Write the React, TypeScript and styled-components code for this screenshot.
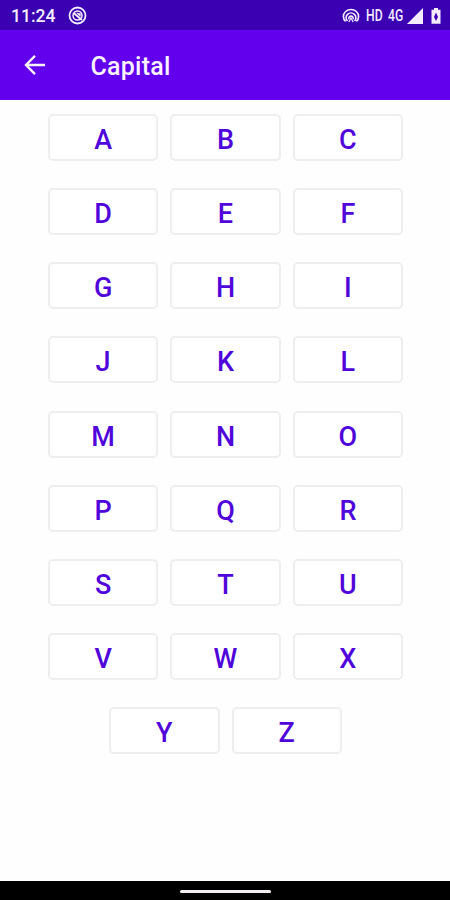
import React from "react";
import styled, { createGlobalStyle } from "styled-components";

const GlobalStyle = createGlobalStyle`
  * { box-sizing: border-box; }
  html, body { margin: 0; padding: 0; background: #fff; }
  body { font-family: Roboto, "Liberation Sans", sans-serif; overflow: hidden; }
`;

const Screen = styled.div`
  width: 450px;
  height: 900px;
  display: flex;
  flex-direction: column;
  background: #fefefe;
`;

const StatusBar = styled.header`
  height: 30px;
  flex: none;
  display: flex;
  align-items: center;
  padding: 2px 8px 0 11px;
  background: #3a00b2;
  color: #f3edff;
`;

const Clock = styled.span`
  width: 57px;
  font-size: 17.5px;
  font-weight: 500;
  line-height: 28px;
`;

const StatusIcons = styled.div`
  margin-left: auto;
  display: flex;
  align-items: center;
`;

const NetworkLabel = styled.span<{ $width: number; $inset?: number }>`
  display: block;
  width: ${(p) => p.$width}px;
  padding-left: ${(p) => p.$inset ?? 0}px;
  font-size: 16px;
  font-weight: 500;
  line-height: 28px;
  white-space: nowrap;

  span {
    display: inline-block;
    transform: scaleX(0.76);
    transform-origin: left center;
  }
`;

const AppBar = styled.div`
  height: 70px;
  flex: none;
  display: flex;
  align-items: center;
  padding-left: 21px;
  background: #6200ee;
  color: #f8f2ff;
`;

const BackButton = styled.button`
  display: flex;
  width: 28px;
  height: 28px;
  margin: 0 41.5px 0 0;
  padding: 0;
  border: 0;
  background: none;
  color: inherit;
`;

const Title = styled.h1`
  margin: 3px 0 0;
  font-size: 25px;
  font-weight: 500;
  line-height: 30px;
  letter-spacing: 0.25px;
`;

const Letters = styled.main`
  flex: 1;
  display: flex;
  flex-direction: column;
  align-items: center;
  gap: 27.15px;
  padding: 14px 0 0 1px;
`;

const LetterRow = styled.div`
  display: flex;
  gap: 12px;
`;

const LetterButton = styled.button`
  width: 110.4px;
  height: 47px;
  padding: 4px 0 0;
  border: 2px solid #eeeeee;
  border-radius: 5px;
  background: #fff;
  color: #5006da;
  font: 500 27px/40px Roboto, "Liberation Sans", sans-serif;
`;

const NavigationBar = styled.footer`
  height: 19px;
  flex: none;
  display: flex;
  justify-content: center;
  padding-top: 9px;
  background: #000;
`;

const GestureHandle = styled.div`
  width: 91px;
  height: 3px;
  border-radius: 2px;
  background: #f3eff3;
`;

const rows = ["ABC", "DEF", "GHI", "JKL", "MNO", "PQR", "STU", "VWX", "YZ"];

const FocusIcon = () => (
  <svg width="20" height="20" viewBox="0 0 20 20" fill="none" stroke="currentColor">
    <circle cx="9.5" cy="9.5" r="8" strokeWidth="1.8" />
    <circle cx="9.5" cy="9.5" r="4.5" strokeWidth="1.5" />
    <path d="M5.8 7 13.8 14" strokeWidth="2" />
    <path d="M8 6.5 12.8 7.5 12.5 11Z" fill="currentColor" stroke="none" />
  </svg>
);

const HotspotIcon = () => (
  <svg width="18" height="16" viewBox="0 0 18 16" fill="none" stroke="currentColor" strokeWidth="1.6">
    <path d="M3.6 13.4A7.6 7 0 1 1 14.4 13.4" />
    <path d="M5.5 13A4.9 4.7 0 1 1 12.5 13" />
    <path d="M7 11.2A2.2 2.2 0 1 1 11 11.2" />
    <path d="m6.8 14 2.2-4 2.2 4" strokeWidth="1.2" />
  </svg>
);

const SignalIcon = () => (
  <svg width="17" height="16" viewBox="0 0 17 16">
    <path d="M16 0v16H0Z" fill="currentColor" />
  </svg>
);

const BatteryIcon = () => (
  <svg width="18" height="18" viewBox="0 0 18 18">
    <path d="M10 1h4v1.8h2.5v14h-9v-14H10Z" fill="currentColor" />
    <path d="m12 5.5 2 4.5-2 4-2-4Z" fill="#3a00b2" />
  </svg>
);

const App = () => (
  <>
    <GlobalStyle />
    <Screen>
      <StatusBar>
        <Clock>11:24</Clock>
        <FocusIcon />
        <StatusIcons>
          <HotspotIcon />
          <NetworkLabel $width={28} $inset={6}>
            <span>HD</span>
          </NetworkLabel>
          <NetworkLabel $width={19}>
            <span>4G</span>
          </NetworkLabel>
          <SignalIcon />
          <BatteryIcon />
        </StatusIcons>
      </StatusBar>
      <AppBar>
        <BackButton aria-label="Back">
          <svg width="28" height="28" viewBox="0 0 28 28" fill="none" stroke="currentColor" strokeWidth="2.4">
            <path d="M24 14H5.8M14 4.9 5 14l9 9.1" />
          </svg>
        </BackButton>
        <Title>Capital</Title>
      </AppBar>
      <Letters>
        {rows.map((row) => (
          <LetterRow key={row}>
            {row.split("").map((letter) => (
              <LetterButton key={letter}>{letter}</LetterButton>
            ))}
          </LetterRow>
        ))}
      </Letters>
      <NavigationBar>
        <GestureHandle />
      </NavigationBar>
    </Screen>
  </>
);

export default App;
